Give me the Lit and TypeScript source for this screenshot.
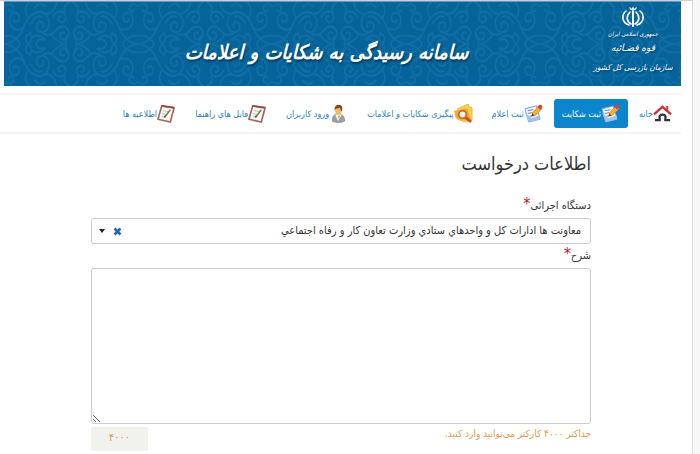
import { LitElement, html, css, svg } from "lit";
import { customElement, state } from "lit/decorators.js";

const house = svg`<svg class="icon" viewBox="0 0 20 20" aria-hidden="true"><path d="M2 17h5v-2c-2-5 8-5 6 0v2h5" fill="none" stroke="#2f3438" stroke-width="2.4"/><path d="M4 10v5M16 10v5" stroke="#d9dcde" stroke-width="1"/><path d="M1 11 10 3l9 8" fill="none" stroke="#c9342c" stroke-width="2.4"/><path d="M14 2h2v5l-2-2z" fill="#c9342c"/></svg>`;
const write = svg`<svg class="icon" viewBox="0 0 20 20" aria-hidden="true"><path d="M1 5 13 2l4 14-12 3z" fill="#f1f6fd" stroke="#6f9ce0"/><path d="M1 9 5 19l12-3-1-4-8 3z" fill="#9fc2f3"/><path d="m4 7 6-1M4 10l5-1M6 13l3-1" stroke="#5b84c6"/><path d="m8 13 1-4 7-7 3 3-7 7z" fill="#f9b02c" stroke="#c9781b" stroke-width=".6"/><path d="m14 3 2-2c2-1 4 1 3 3l-2 2z" fill="#e0402e"/><path d="m8 13 1-3 2 2z" fill="#4a3828"/></svg>`;
const search = svg`<svg class="icon" viewBox="0 0 20 20" aria-hidden="true"><path d="m4 5 11-5 1 3 3 1v13l-7 2-8-3z" fill="#fbd04b" stroke="#e5a92d" stroke-width=".8"/><path d="m0 7 14-2 4 13-8-1-8-2z" fill="#f8a928"/><path d="m12 14 5 4" stroke="#cb531c" stroke-width="3" stroke-linecap="round"/><circle cx="9" cy="11" r="4" fill="#e8f3fc" stroke="#d4601f" stroke-width="1.8"/></svg>`;
const user = svg`<svg class="icon" viewBox="-3 0 19 20" aria-hidden="true"><path d="M0 18c0-5 2-8 6-8s7 3 7 8c-3 2-10 2-13 0z" fill="#9ba1a9" stroke="#737a83" stroke-width=".7"/><path d="m3 11 3 7 4-7z" fill="#fff"/><path d="m6 12 2 0-1 5z" fill="#df9a25"/><ellipse cx="6.500" cy="6" rx="3.600" ry="4.800" fill="#f6b95c"/><path d="M2.500 7C1 0 10-1 10.500 4c.3 3-1 3-1 4-1-2-1-4-2-4-2 1-4 0-5 3z" fill="#7b4a22"/></svg>`;
const note = svg`<svg class="icon" viewBox="0 0 20 20" aria-hidden="true"><path d="M5 2 18 4 14 19 1 16z" fill="#fbf9f4" stroke="#a5625b" stroke-width="1.700"/><path d="m5 2 13 2" stroke="#8c5149" stroke-width="2"/><path d="m6 7 6 1M5 10l5 1M5 13l4 1" stroke="#b9c0b5"/><path d="m8 14 6-8" stroke="#62854b" stroke-width="1.600"/><path d="m7 15 1-3 1 1z" fill="#333"/></svg>`;

const emblem = svg`<svg class="emblem" viewBox="0 0 24 22" aria-hidden="true"><g fill="none" stroke="#fff" stroke-linecap="round"><path d="M12 5v15" stroke-width="2"/><path d="M9 6c-4 4-4 9 1 12M15 6c4 4 4 9-1 12" stroke-width="1.600"/><path d="M5 5c-5 4-4 12 3 14M19 5c5 4 4 12-3 14" stroke-width="1.600"/><path d="M9 2c1 2 2 2 3 0 1 2 2 2 3 0" stroke-width="1.400"/></g></svg>`;

const ornament = svg`<svg class="ornament" aria-hidden="true" width="100%" height="100%"><defs>
<g id="scroll"><path d="M0 42c14-1 20-8 24-16C29 14 42 6 51 12c10 7 4 20-5 18-7-1-7-10 0-10 3 0 4 4 2 6M24 26C16 30 6 26 7 17c1-8 12-8 12-1 0 5-7 5-7 1M30 16C25 10 26 4 32 0M51 12c7 0 13-4 15-12M46 30c6 4 13 4 18-1 7-7 16-5 17 2 1 8-10 9-11 3 0-4 5-5 6-2M60 32c2 5 7 8 16 10M0 4c8-4 13 0 11 4-2 3-6 1-5-1M61 16c2-7 14-9 16-2 1 6-7 9-9 4-1-3 2-5 4-3M30 42c-5-5-3-9 3-11 2 5 2 8-3 11M20 42c-4-7-12-9-20-8M40 42c2-4 6-6 11-4M33 22c4-6 10-9 15-7M34 36c6-4 12-3 18 2M38 6c5-6 12-4 14-1M78 42c-2-4-2-8 4-9M82 0c-6 3-9 6-5 10"/></g>
<pattern id="damask" width="134" height="84" patternUnits="userSpaceOnUse"><g fill="none" stroke="#2583b5" stroke-width="2" opacity=".3"><g transform="scale(.8 1)"><use href="#scroll"/><use href="#scroll" transform="matrix(1 0 0 -1 0 84)"/><use href="#scroll" transform="matrix(-1 0 0 1 168 0)"/><use href="#scroll" transform="matrix(-1 0 0 -1 168 84)"/></g></g></pattern></defs><rect width="100%" height="100%" fill="url(#damask)"/></svg>`;

interface NavItem { label: string; icon: unknown; active?: boolean; }

const items: NavItem[] = [
  { label: "خانه", icon: house },
  { label: "ثبت شکایت", icon: write, active: true },
  { label: "ثبت اعلام", icon: write },
  { label: "پیگیری شکایات و اعلامات", icon: search },
  { label: "ورود کاربران", icon: user },
  { label: "فایل های راهنما", icon: note },
  { label: "اطلاعیه ها", icon: note },
];

@customElement("site-banner")
class SiteBanner extends LitElement {
  static styles = css`
    :host { display: block; }
    .banner { position: relative; display: grid; grid-template-columns: 96px 1fr 64px; height: 85px; background: #06649b; color: #fff; overflow: hidden; border-top: 1px solid #5c9dc2; box-sizing: border-box; }
    .ornament { position: absolute; inset: 0; }
    .title { position: relative; grid-column: 2; margin: 0; padding-top: 26px; text-align: center; font: italic 700 20px/48px "DejaVu Sans Condensed", "DejaVu Sans", sans-serif; white-space: nowrap; text-shadow: 1px 2px 2px #033a60; }
    .brand { position: relative; grid-column: 1; grid-row: 1; display: flex; flex-direction: column; align-items: center; padding-top: 4px; white-space: nowrap; text-shadow: 1px 1px 2px #033a60; font-family: "DejaVu Sans Condensed", "DejaVu Sans", sans-serif; font-style: italic; }
    .emblem { width: 24px; height: 22px; flex: none; }
    .small { font-size: 6px; line-height: 12px; }
    .mid { font-size: 10px; line-height: 16px; }
    .org { font-size: 8px; line-height: 24px; }
  `;
  render() {
    return html`<header class="banner">${ornament}
      <div class="brand">${emblem}<span class="small">جمهوری اسلامی ایران</span><span class="mid">قوه قضـائیه</span><span class="org">سازمان بازرسی کل کشور</span></div>
      <h1 class="title">سامانه رسیدگی به شکایات و اعلامات</h1>
    </header>`;
  }
}

@customElement("site-nav")
class SiteNav extends LitElement {
  static styles = css`
    :host { display: block; }
    .list { display: flex; align-items: center; gap: 3px; margin: 0; padding: 4px 1px; list-style: none; border: solid #f6f4f4; border-width: 2px 0; }
    .link { display: flex; align-items: center; height: 29px; padding: 0 8px; border-radius: 3px; color: #2b7fb8; text-decoration: none; white-space: nowrap; font: 400 9px/16px "DejaVu Sans Condensed", "DejaVu Sans", sans-serif; }
    .active { background: #0b85cb; color: #fff; }
    .icon { width: 19px; height: 19px; flex: none; }
  `;
  render() {
    return html`<nav><ul class="list">${items.map((i) => html`<li><a class="link ${i.active ? "active" : ""}" href="#">${i.icon}<span>${i.label}</span></a></li>`)}</ul></nav>`;
  }
}

@customElement("app-root")
class AppRoot extends LitElement {
  @state() private chosen = "1";
  static styles = css`
    :host { display: block; direction: rtl; min-height: 100vh; box-sizing: border-box; padding-right: 7px; background: #f7f7f7; color: #333; font-family: "DejaVu Sans Condensed", "DejaVu Sans", sans-serif; }
    .page { min-height: 100vh; box-sizing: border-box; padding: 0 11px 0 4px; background: #fff; border-right: 1px solid #dcdcdc; border-top: 1px solid #cfcfcf; }
    .nav { display: block; margin: 7px 0 0 -4px; }
    .form { padding: 16px 90px 0 87px; }
    .heading { margin: 0 0 16px; font-size: 18px; line-height: 28px; font-weight: 400; }
    .label { display: block; font-size: 11px; line-height: 24px; }
    .star { color: #b3262c; font-size: 16px; line-height: 16px; }
    .combo { display: flex; align-items: center; height: 26px; box-sizing: border-box; border: 1px solid #ccc; border-radius: 3px; padding: 0 9px 0 7px; }
    .select { flex: 1; min-width: 0; height: 22px; padding: 0; appearance: none; border: 0; background: none; color: #333; font: 11px/22px "DejaVu Sans Condensed", "DejaVu Sans", sans-serif; direction: rtl; }
    .clear { display: flex; margin: 0 0 0 8px; padding: 0; border: 0; background: none; }
    .area { display: block; width: 100%; height: 156px; box-sizing: border-box; border: 1px solid #ccc; border-radius: 3px; background: #fff; }
    .foot { display: flex; justify-content: space-between; align-items: flex-start; padding-top: 3px; color: #dc9b4c; }
    .hint { font-size: 10px; line-height: 14px; }
    .count { width: 57px; line-height: 22px; height: 24px; text-align: center; font-size: 11px; background: #f1f1ee; border-radius: 2px; }
  `;
  render() {
    return html`<div class="page">
      <site-banner></site-banner>
      <site-nav class="nav"></site-nav>
      <main class="form">
        <h2 class="heading">اطلاعات درخواست</h2>
        <label class="label" for="org">دستگاه اجرائی<span class="star">*</span></label>
        <div class="combo">
          <select id="org" class="select" .value=${this.chosen}><option value="1">معاونت ها ادارات كل و واحدهاي ستادي وزارت تعاون كار و رفاه اجتماعي</option></select>
          <button class="clear" type="button" aria-label="پاک کردن"><svg width="9" height="9" viewBox="0 0 9 9"><path d="m1.500 1.500 6 6m0-6-6 6" stroke="#2369ac" stroke-width="2.600"/></svg></button>
          <svg width="6" height="4" viewBox="0 0 6 4" aria-hidden="true"><path d="M0 0h6L3 4z" fill="#222"/></svg>
        </div>
        <label class="label" for="desc">شرح<span class="star">*</span></label>
        <textarea id="desc" class="area"></textarea>
        <div class="foot"><span class="hint">حداکثر ۴۰۰۰ کارکتر می‌توانید وارد کنید.</span><output class="count" for="desc">۴۰۰۰</output></div>
      </main>
    </div>`;
  }
}
